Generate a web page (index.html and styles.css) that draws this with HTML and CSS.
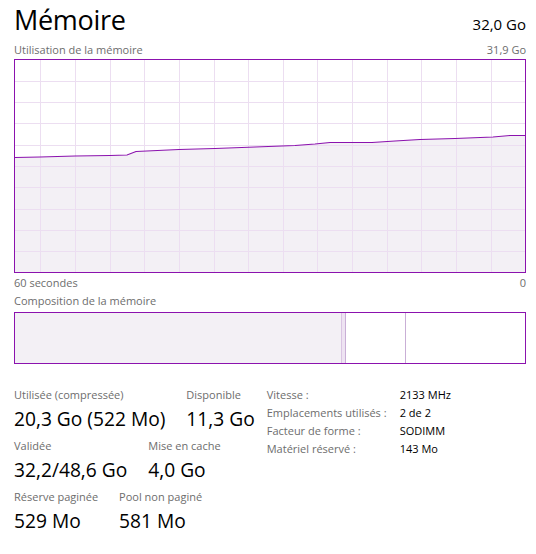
FILE: index.html
```html
<!DOCTYPE html>
<html lang="fr">
<head>
<meta charset="utf-8">
<title>Mémoire</title>
<link rel="stylesheet" href="styles.css">
</head>
<body>
<div class="page">
  <div class="head">
    <h1 class="title">Mémoire</h1>
    <span class="total">32,0 Go</span>
  </div>
  <div class="caption cap-top"><span>Utilisation de la mémoire</span><span>31,9 Go</span></div>
  <div class="graph">
    <svg class="graph-svg" width="510" height="212" viewBox="0 0 510 212">
      <path class="area" d="M0 97.5 L25 97 L60 96 L95 95.5 L112 95 L121 91.5 L164 89.5 L200 88.5 L240 87 L280 85.5 L300 84 L315 82.5 L357 82.5 L380 81 L405 79.5 L440 78.5 L478 77 L495 75.5 L510 75.5 L510 212 L0 212 Z"/>
      <g class="grid">
        <line x1="25.5" y1="0" x2="25.5" y2="212"/>
        <line x1="60.5" y1="0" x2="60.5" y2="212"/>
        <line x1="95.5" y1="0" x2="95.5" y2="212"/>
        <line x1="129.5" y1="0" x2="129.5" y2="212"/>
        <line x1="164.5" y1="0" x2="164.5" y2="212"/>
        <line x1="199.5" y1="0" x2="199.5" y2="212"/>
        <line x1="233.5" y1="0" x2="233.5" y2="212"/>
        <line x1="268.5" y1="0" x2="268.5" y2="212"/>
        <line x1="302.5" y1="0" x2="302.5" y2="212"/>
        <line x1="337.5" y1="0" x2="337.5" y2="212"/>
        <line x1="372.5" y1="0" x2="372.5" y2="212"/>
        <line x1="406.5" y1="0" x2="406.5" y2="212"/>
        <line x1="441.5" y1="0" x2="441.5" y2="212"/>
        <line x1="476.5" y1="0" x2="476.5" y2="212"/>
        <line x1="0" y1="21.5" x2="510" y2="21.5"/>
        <line x1="0" y1="42.5" x2="510" y2="42.5"/>
        <line x1="0" y1="63.5" x2="510" y2="63.5"/>
        <line x1="0" y1="85.5" x2="510" y2="85.5"/>
        <line x1="0" y1="106.5" x2="510" y2="106.5"/>
        <line x1="0" y1="127.5" x2="510" y2="127.5"/>
        <line x1="0" y1="149.5" x2="510" y2="149.5"/>
        <line x1="0" y1="170.5" x2="510" y2="170.5"/>
        <line x1="0" y1="191.5" x2="510" y2="191.5"/>
      </g>
      <path class="line" d="M0 97.5 L25 97 L60 96 L95 95.5 L112 95 L121 91.5 L164 89.5 L200 88.5 L240 87 L280 85.5 L300 84 L315 82.5 L357 82.5 L380 81 L405 79.5 L440 78.5 L478 77 L495 75.5 L510 75.5"/>
    </svg>
  </div>
  <div class="caption cap-axis"><span>60 secondes</span><span>0</span></div>
  <div class="caption cap-compo"><span>Composition de la mémoire</span></div>
  <div class="compo">
    <div class="seg seg-used"></div>
    <div class="seg seg-modified"></div>
    <div class="seg seg-standby"></div>
    <div class="seg seg-free"></div>
  </div>
  <div class="stats">
    <div class="stat-block">
      <div class="stat-row">
        <div class="stat"><div class="lbl">Utilisée (compressée)</div><div class="val">20,3 Go (522 Mo)</div></div>
        <div class="stat"><div class="lbl">Disponible</div><div class="val">11,3 Go</div></div>
      </div>
      <div class="stat-row">
        <div class="stat"><div class="lbl">Validée</div><div class="val">32,2/48,6 Go</div></div>
        <div class="stat"><div class="lbl">Mise en cache</div><div class="val">4,0 Go</div></div>
      </div>
      <div class="stat-row">
        <div class="stat"><div class="lbl">Réserve paginée</div><div class="val">529 Mo</div></div>
        <div class="stat"><div class="lbl">Pool non paginé</div><div class="val">581 Mo</div></div>
      </div>
    </div>
    <div class="specs">
      <span class="k">Vitesse :</span><span class="v">2133 MHz</span>
      <span class="k">Emplacements utilisés :</span><span class="v">2 de 2</span>
      <span class="k">Facteur de forme :</span><span class="v">SODIMM</span>
      <span class="k">Matériel réservé :</span><span class="v">143 Mo</span>
    </div>
  </div>
</div>
</body>
</html>
```

FILE: styles.css
```css
* { box-sizing: border-box; }
html, body { margin: 0; padding: 0; background: #fff; }
body {
  font-family: "Open Sans", "Noto Sans", sans-serif;
  color: #000;
  width: 536px;
  height: 554px;
  overflow: hidden;
}
.page { padding: 0 10px 0 14px; }

.head {
  display: flex;
  justify-content: space-between;
  align-items: baseline;
  height: 38px;
  padding-top: 6px;
}
.title {
  margin: 0;
  font-size: 27px;
  font-weight: 400;
  line-height: 27px;
  letter-spacing: -0.3px;
}
.total { font-size: 15px; line-height: 15px; }

.caption {
  display: flex;
  justify-content: space-between;
  font-size: 11px;
  color: #6d6d6d;
  line-height: 14px;
}
.cap-top { height: 21px; padding-top: 5px; }
.cap-axis { height: 19px; padding-top: 3px; }
.cap-compo { height: 20px; padding-top: 2px; }

.graph {
  width: 512px;
  height: 214px;
  border: 1px solid #8b12ae;
}
.graph-svg { display: block; }
.grid line { stroke: #ecdef1; stroke-width: 1; }
.area { fill: #f3f0f5; }
.line { fill: none; stroke: #8b12ae; stroke-width: 1.2; }

.compo {
  display: flex;
  width: 512px;
  height: 52px;
  border: 1px solid #8b12ae;
}
.seg { height: 100%; }
.seg-used { width: 326px; background: #f3f0f5; }
.seg-modified {
  width: 5px;
  background: #eee3f2;
  border-left: 1px solid #d9c4e2;
  border-right: 1px solid #c9afd6;
}
.seg-standby { width: 60px; border-right: 1px solid #c9afd6; }
.seg-free { flex: 1; }

.stats {
  display: flex;
  align-items: flex-start;
  padding-top: 24px;
}
.stat-block { display: flex; flex-direction: column; }
.stat-row { display: flex; gap: 21px; height: 51px; }
.lbl {
  font-size: 11px;
  color: #6d6d6d;
  line-height: 14px;
  height: 18px;
}
.val {
  font-size: 19.2px;
  line-height: 26px;
}
.specs {
  margin-left: 12px;
  display: grid;
  grid-template-columns: 133px auto;
  grid-auto-rows: 18px;
  font-size: 11px;
  line-height: 14px;
}
.specs .k { color: #6d6d6d; }
.specs .v { color: #000; }
```
